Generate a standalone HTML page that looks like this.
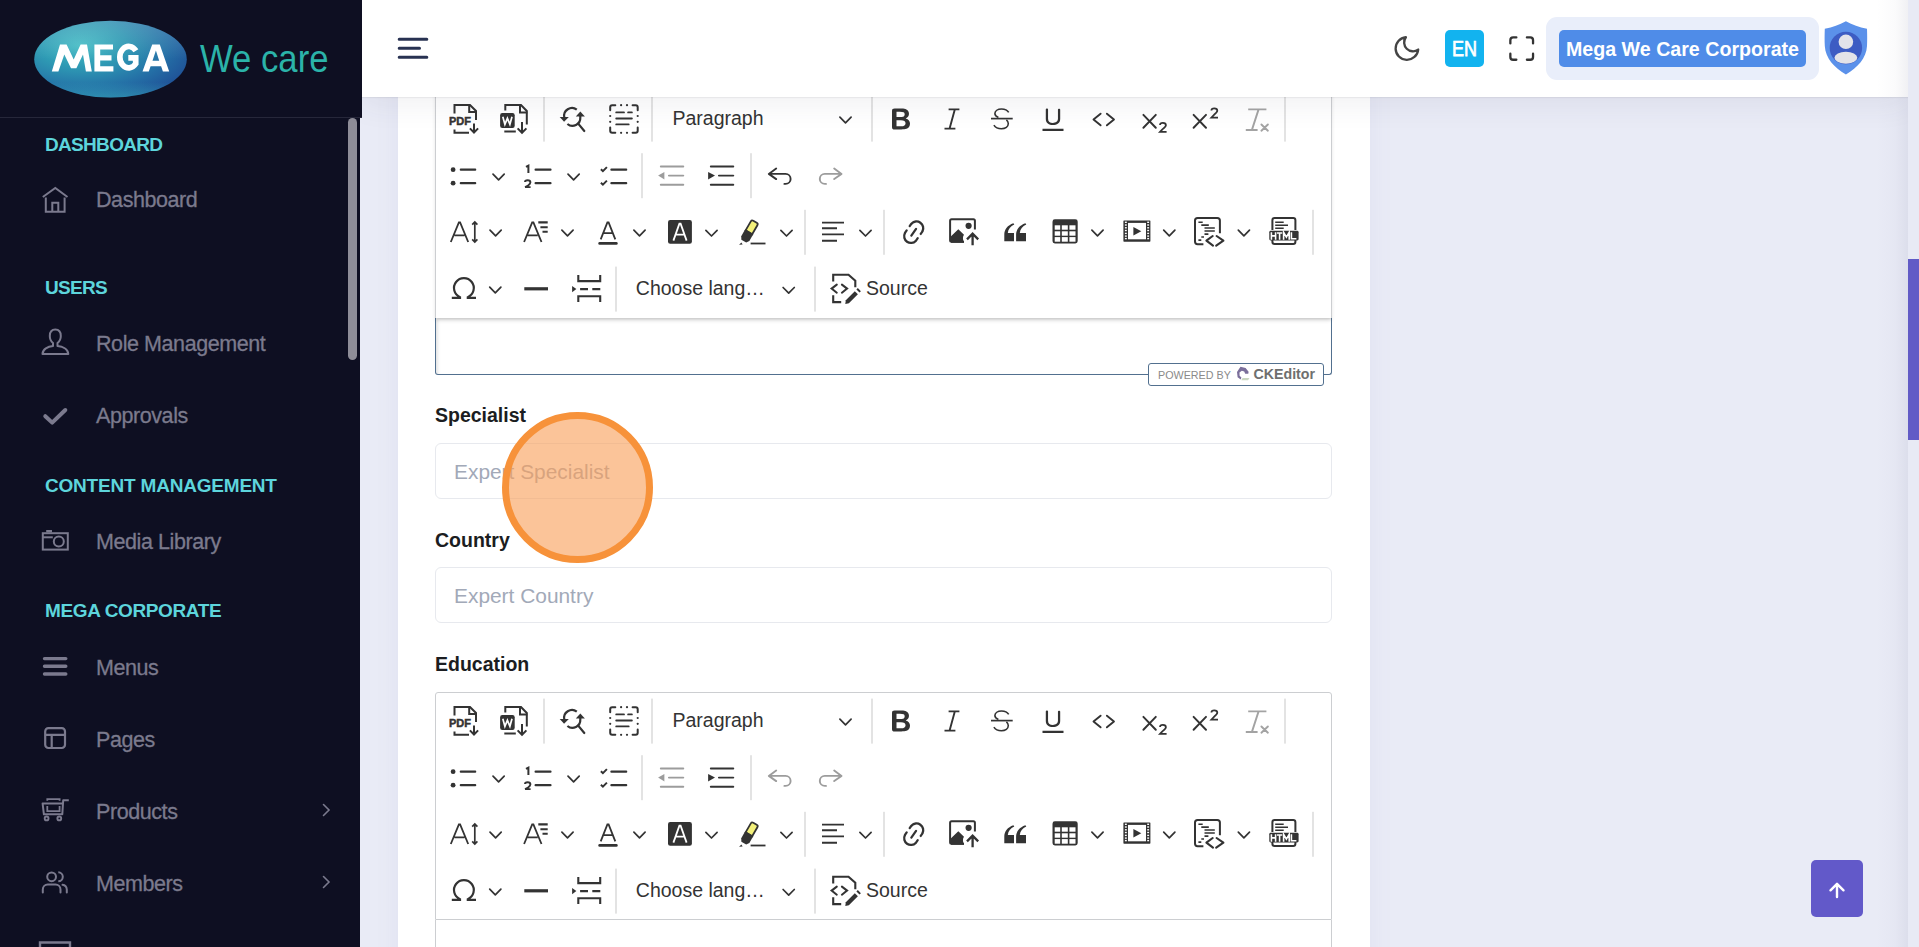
<!DOCTYPE html>
<html><head><meta charset="utf-8">
<style>
*{box-sizing:border-box;margin:0;padding:0}
html,body{width:1919px;height:947px;overflow:hidden}
body{background:#e9ebf6;font-family:"Liberation Sans",sans-serif;position:relative}
#sidebar{position:absolute;left:0;top:0;width:360px;height:947px;background:#0e0f22;z-index:11}
#logo{position:absolute;left:0;top:0;width:362px;height:118px;background:#0e0f22;border-bottom:1px solid #26273a;z-index:12}
.sb-scroll{position:absolute;left:348px;top:118px;width:9px;height:242px;border-radius:5px;background:#8e8d98}
.sh{position:absolute;left:45px;color:#5dd5dc;font-weight:700;font-size:19px;line-height:20px;white-space:nowrap;letter-spacing:-0.68px}
.si{position:absolute;left:96px;color:#7b7a8d;font-size:21.5px;line-height:24px;white-space:nowrap;letter-spacing:-0.42px;-webkit-text-stroke:0.3px #7b7a8d}
.ic{position:absolute;left:41px;top:0;width:28px;height:28px;overflow:visible}
#header{position:absolute;left:361px;top:0;width:1547px;height:97px;background:#fff;box-shadow:0 1px 1px rgba(0,0,0,.05),0 8px 28px rgba(50,50,80,.07);z-index:10}
#vscroll{position:absolute;left:1908px;top:0;width:11px;height:947px;background:#e8eaf5;z-index:11}
#vthumb{position:absolute;left:1908px;top:259px;width:11px;height:181px;background:#615bc6;z-index:12}
#card{position:absolute;left:398px;top:-10px;width:972px;height:1000px;background:#fff;box-shadow:0 0 24px rgba(110,110,170,.07)}
.lbl{position:absolute;left:435px;font-weight:700;font-size:19.5px;color:#1b1d21;white-space:nowrap;line-height:22px}
.inp{position:absolute;left:435px;width:897px;height:56px;border:1px solid #e7e9ee;border-radius:6px;background:#fff}
.ph{position:absolute;left:18px;top:16px;font-size:20.9px;color:#a2a9b8;white-space:nowrap;line-height:24px}
.tbwrap{position:absolute;left:435px;width:897px;height:228px;background:#fff;border:1px solid #ccced1}
.tbsvg{position:absolute;left:-1px;top:-1px;width:896px;height:228px;overflow:visible}
#ed1tb{top:90px;border-top:none;border-bottom:none;box-shadow:0 3px 4px -1px rgba(0,0,0,.17);z-index:3}
#ed1ed{position:absolute;left:435px;top:317px;width:897px;height:58px;border:1px solid #52708f;border-top:none;border-radius:0 0 3px 3px;background:#fff;box-shadow:inset 2px 2px 3px rgba(0,0,0,.1);z-index:2}
#badge{position:absolute;left:1148px;top:363px;width:176px;height:23px;border:1px solid #52708f;border-radius:3px;background:#fff;z-index:4}
#ed2tb{top:692px;border-radius:3px 3px 0 0}
#ed2ed{position:absolute;left:435px;top:920px;width:897px;height:60px;border:1px solid #ccced1;border-top:none;background:#fff}
#scrolltop{position:absolute;left:1811px;top:860px;width:52px;height:57px;background:#6259c9;border-radius:5px;z-index:20}
#cursor{position:absolute;left:502px;top:412px;width:151px;height:151px;border-radius:50%;border:7px solid #f7923a;background:rgba(248,160,90,.62);z-index:30}
</style></head><body>
<svg width="0" height="0" style="position:absolute">
<defs>
<g id="chev"><path d="M-5.6,-2.9 L0,2.8 L5.6,-2.9" fill="none" stroke="#333" stroke-width="1.7" stroke-linecap="round" stroke-linejoin="round"/></g>
<g id="tb" fill="none" stroke="#333" stroke-width="2">
 <!-- separators -->
 <g stroke="none" fill="#c8c8c8">
  <rect x="108.5" y="6.6" width="1" height="45"/><rect x="216.5" y="6.6" width="1" height="45"/><rect x="436.5" y="6.6" width="1" height="45"/><rect x="849.5" y="6.6" width="1" height="45"/>
  <rect x="206.5" y="63.2" width="1" height="45"/><rect x="315.5" y="63.2" width="1" height="45"/>
  <rect x="369.5" y="119.8" width="1" height="45"/><rect x="448.5" y="119.8" width="1" height="45"/><rect x="877.5" y="119.8" width="1" height="45"/>
  <rect x="180.5" y="176.6" width="1" height="45"/><rect x="379.5" y="176.6" width="1" height="45"/>
 </g>
 <!-- ROW 1 -->
 <!-- PDF -->
 <path d="M19.5,23.6 V15.1 H35 L41,21 V30"/>
 <path d="M34.2,15 V22 H41.5" />
 <path d="M19.5,39.5 V42.8 H34"/>
 <text x="14" y="34.9" font-family="Liberation Sans" font-weight="700" font-size="10" textLength="22" lengthAdjust="spacingAndGlyphs" fill="#333" stroke="#333" stroke-width="0.45">PDF</text>
 <path d="M39,33.5 V43"/><path d="M34.9,38.4 L39,42.5 L43.1,38.4"/>
 <!-- Word -->
 <path d="M70.3,20.5 V15.1 H86 L91.8,21 V34.4"/>
 <path d="M85,15 V22.6 H92.3"/>
 <rect x="65.1" y="23" width="14.6" height="14.9" rx="2.2" fill="#333" stroke="none"/>
 <path d="M67.8,26.8 L69.9,34.3 L72.4,28.3 L74.9,34.3 L77,26.8" stroke="#fff" stroke-width="1.7" stroke-linejoin="miter"/>
 <path d="M69.3,41.5 H80.8"/>
 <path d="M87,32 V43"/><path d="M82.6,38.4 L87,42.8 L91.4,38.4"/>
 <!-- find replace -->
 <path d="M141.8,19.6 A7.9,7.9 0 0 0 129.3,27.6" stroke-width="2.2"/>
 <path d="M124.7,27.1 L133.8,27.1 L129.1,31.8 Z" fill="#333" stroke="none"/>
 <path d="M132.4,34 A7.9,7.9 0 0 0 145.3,27.5 V25.5" stroke-width="2.2"/>
 <path d="M140.8,26.6 L149.9,26.6 L145.3,21.6 Z" fill="#333" stroke="none"/>
 <path d="M143.2,33.6 L149.3,41" stroke-width="2.2" stroke-linecap="round"/>
 <!-- select all -->
 <g transform="translate(174,14)" stroke-linecap="round">
  <path d="M1.2,6.3 V3.2 Q1.2,1.2 3.2,1.2 H6.3"/><path d="M23.6,1.2 H26.7 Q28.7,1.2 28.7,3.2 V6.3"/>
  <path d="M1.2,23.6 V26.8 Q1.2,28.8 3.2,28.8 H6.3"/><path d="M23.6,28.8 H26.7 Q28.7,28.8 28.7,26.8 V23.6"/>
  <g fill="#333" stroke="none">
   <circle cx="12.1" cy="1.2" r="1.1"/><circle cx="18" cy="1.2" r="1.1"/><circle cx="12.1" cy="28.8" r="1.1"/><circle cx="18" cy="28.8" r="1.1"/>
   <circle cx="1.2" cy="12" r="1.1"/><circle cx="1.2" cy="17.8" r="1.1"/><circle cx="28.7" cy="12" r="1.1"/><circle cx="28.7" cy="17.8" r="1.1"/>
  </g>
  <path d="M7.2,8.4 H15 M19.1,8.4 H22.9 M7.2,14.5 H22.9 M7.2,20.4 H19.7" stroke-width="1.8"/>
 </g>
 <text x="237.5" y="35" font-family="Liberation Sans" font-size="19.5" fill="#333" stroke="none">Paragraph</text>
 <use href="#chev" x="410.5" y="30"/>
 <!-- bold -->
 <path transform="translate(451,14) scale(1.5)" fill="#333" stroke="none" d="M10.187 17H5.773c-.637 0-1.092-.138-1.364-.415-.273-.277-.409-.718-.409-1.323V4.738c0-.617.14-1.062.419-1.332.279-.27.73-.406 1.354-.406h4.68c.69 0 1.288.041 1.793.124.506.083.96.242 1.36.478.341.197.644.447.906.75a3.262 3.262 0 0 1 .808 2.162c0 1.401-.722 2.426-2.167 3.075C15.05 10.175 16 11.315 16 13.01a3.756 3.756 0 0 1-2.296 3.504 6.1 6.1 0 0 1-1.517.377c-.571.073-1.238.11-2 .11zm-.217-6.217H7v4.087h3.069c1.977 0 2.965-.69 2.965-2.072 0-.707-.256-1.22-.768-1.537-.512-.319-1.277-.478-2.296-.478zM7 5.13v3.619h2.606c.729 0 1.292-.067 1.69-.2a1.6 1.6 0 0 0 .91-.765c.165-.267.247-.566.247-.897 0-.707-.26-1.176-.778-1.409-.519-.232-1.31-.348-2.375-.348H7z"/>
 <!-- italic -->
 <path d="M513.6,19.4 H524.4 M509.5,38.6 H520.4 M519.8,19.6 L514.6,38.4" stroke-width="1.9"/>
 <!-- strike -->
 <path d="M556,28.6 H577.7" stroke-width="1.7"/>
 <path d="M573.7,22.4 C572.4,20.2 569.8,19 566.6,19 C562.6,19 559.9,21 559.9,23.6 C559.9,25.4 561.1,26.6 563.4,27.6" stroke-width="1.6"/>
 <path d="M571.4,29.8 C572.6,30.8 573.3,32 573.3,33.6 C573.3,36.6 570.4,38.7 566.4,38.7 C562.9,38.7 560.3,37.3 558.9,35.1" stroke-width="1.6"/>
 <!-- underline -->
 <path transform="translate(603,14) scale(1.5)" fill="#333" stroke="none" d="M3 18v-1.5h14V18zm2.2-8V3.6c0-.4.4-.6.8-.6.3 0 .7.2.7.6v6.2c0 2 1.3 2.8 3.2 2.8 1.9 0 3.4-.9 3.4-2.9V3.6c0-.3.4-.5.8-.5.3 0 .7.2.7.5V10c0 2.7-2.2 4-4.9 4-2.6 0-4.7-1.2-4.7-4z"/>
 <!-- code -->
 <path d="M665.6,23.7 L658.5,29.5 L665.6,35.3 M671.9,23.7 L679,29.5 L671.9,35.3" stroke-width="1.9" stroke-linecap="round" stroke-linejoin="round"/>
 <!-- subscript -->
 <path d="M708.4,24.9 L720.8,37.7 M720.8,24.9 L708.4,37.7" stroke-width="1.95" stroke-linecap="round"/>
 <path d="M725,35 C725,33.6 726.1,32.8 727.9,32.8 C729.7,32.8 730.9,33.7 730.9,35.2 C730.9,36.7 729.7,37.6 727.6,39.2 L725,41.9 H731.6" stroke-width="1.75"/>
 <!-- superscript -->
 <path d="M758.6,24.9 L771,37.7 M771,24.9 L758.6,37.7" stroke-width="1.95" stroke-linecap="round"/>
 <path d="M776.4,20.6 C776.4,19.2 777.5,18.4 779.3,18.4 C781.1,18.4 782.3,19.3 782.3,20.8 C782.3,22.3 781.1,23.2 779,24.8 L776.4,27.5 H783" stroke-width="1.75"/>
 <!-- remove format -->
 <g stroke="#a3a3a3">
  <path d="M813.2,19.4 H831.4 M823.5,19.6 L817.1,39.4 M810.8,40 H822.6" stroke-width="1.9"/>
  <path d="M826.4,34.5 L832.9,40.7 M832.9,34.5 L826.4,40.7" stroke-width="1.9" stroke-linecap="round"/>
 </g>
 <!-- ROW 2 -->
 <g fill="#333" stroke="none"><circle cx="18.1" cy="79.7" r="2.4"/><circle cx="18.1" cy="93.2" r="2.4"/></g>
 <path d="M25.8,79.7 H40.2 M25.8,93.2 H40.2" stroke-width="2.2" stroke-linecap="round"/>
 <use href="#chev" x="63.6" y="87"/>
 <path d="M91,76.9 L93.4,75.6 V82.9" stroke-width="2"/>
 <path d="M90,92 C90,90.9 91.1,90.3 92.6,90.3 C94.2,90.3 95.4,91 95.4,92.5 C95.4,93.8 94.4,94.6 92.6,95.9 L90.1,97.1 H95.6" stroke-width="1.9"/>
 <path d="M100.6,79.7 H115.5 M100.6,93.2 H115.5" stroke-width="2.2" stroke-linecap="round"/>
 <use href="#chev" x="138.6" y="87"/>
 <path d="M165.9,79.2 L167.9,81.1 L171.9,77.1 M165.9,92.7 L167.9,94.6 L171.9,90.6" stroke-width="2"/>
 <path d="M176.4,79.7 H191.2 M176.4,93.2 H191.2" stroke-width="2.2" stroke-linecap="round"/>
 <!-- outdent -->
 <g stroke="#9c9c9c" fill="#9c9c9c">
  <path d="M225.8,76.5 H248.3 M233.9,85.6 H248.3 M225.8,94.8 H248.3" stroke-width="1.9" stroke-linecap="round"/>
  <path d="M223.1,85.6 L229.4,81.9 V89.4 Z" stroke="none"/>
 </g>
 <path d="M275.8,76.5 H298.3 M283.9,85.6 H298.3 M275.8,94.8 H298.3" stroke-width="1.9" stroke-linecap="round"/>
 <path d="M273.1,81.9 L280,85.6 L273.1,89.4 Z" fill="#333" stroke="none"/>
 <!-- redo -->
 <path d="M399.2,78.6 L406.5,83.9 L399.2,89.1 M406,83.9 H389.8 A5,5 0 0 0 389.8,93.9 H391" stroke="#9c9c9c" stroke-width="1.9" stroke-linecap="round" stroke-linejoin="round"/>
 <!-- ROW 3 -->
 <path d="M15.8,152 L23.9,132.5 H25.1 L33.2,152 M19.5,145.3 H29.5" stroke-width="1.8"/>
 <path d="M39.8,132.5 V151.5 M37.2,134.6 L39.8,132 L42.4,134.6 M37.2,149.4 L39.8,152 L42.4,149.4" stroke-width="1.7"/>
 <use href="#chev" x="60.6" y="143"/>
 <path d="M89.1,152 L97.2,132.5 H98.4 L106.5,152 M92.7,145.3 H102.7" stroke-width="1.8"/>
 <path d="M103.3,132.4 H112.7 M105.4,137.2 H112.7 M107.5,141.8 H112.7" stroke-width="2.1"/>
 <use href="#chev" x="132.5" y="143"/>
 <path d="M165.7,149.4 L172.4,132.5 H173.6 L180.3,149.4 M168.4,143.2 H177.6" stroke-width="1.8"/>
 <path d="M164.6,153.4 H181.4" stroke-width="2.6" stroke-linecap="round"/>
 <use href="#chev" x="204.5" y="143"/>
 <rect x="233" y="130.1" width="23.9" height="23.7" rx="2.2" fill="#333" stroke="none"/>
 <path d="M238.4,150.6 L244.4,133.7 H245.6 L251.6,150.6 M240.6,144.7 H249.4" stroke="#fff" stroke-width="1.8"/>
 <use href="#chev" x="276.5" y="143.2"/>
 <!-- highlighter -->
 <g transform="translate(314.3,141.6) rotate(30)">
  <path d="M-3.8,0.8 V-9.6 Q-3.8,-11.4 -2,-11.4 H2 Q3.8,-11.4 3.8,-9.6 V0.8 Z" fill="#f3f07a" stroke="#333" stroke-width="1.8"/>
  <path d="M-4.7,0 H4.7 V8 L2.8,11 H-2.8 L-4.7,8 Z" fill="#333" stroke="none"/>
 </g>
 <path d="M304.1,154.8 L307.6,154.4 L306.4,152.6 Z" fill="#333" stroke="none"/>
 <path d="M315.6,153.5 H330.5" stroke-width="1.8"/>
 <use href="#chev" x="351.5" y="143.2"/>
 <path d="M387,132.6 H409 M387,138.3 H402 M387,144.4 H409 M387,150.7 H402" stroke-width="1.9"/>
 <use href="#chev" x="430.5" y="143.2"/>
 <!-- link -->
 <path transform="translate(463.7,127.2) scale(1.5)" fill="#333" stroke="none" d="m11.077 15 .991-1.416a.75.75 0 1 1 1.229.86l-1.148 1.64a.748.748 0 0 1-.217.206 5.251 5.251 0 0 1-8.503-5.955.741.741 0 0 1 .12-.274l1.147-1.639a.75.75 0 1 1 1.228.86L4.933 10.7l.006.003a3.75 3.75 0 0 0 6.132 4.294l.006.004zm5.494-5.335a.748.748 0 0 1-.12.274l-1.147 1.639a.75.75 0 1 1-1.228-.86l.86-1.23a3.75 3.75 0 0 0-6.144-4.301l-.86 1.229a.75.75 0 0 1-1.229-.86l1.148-1.64a.748.748 0 0 1 .217-.206 5.251 5.251 0 0 1 8.503 5.955zm-4.563-2.532a.75.75 0 0 1 .184 1.045l-3.155 4.505a.75.75 0 1 1-1.229-.86l3.155-4.506a.75.75 0 0 1 1.045-.184z"/>
 <!-- image upload -->
 <path d="M529,151.8 H516.6 Q515.1,151.8 515.1,150.3 V130.7 Q515.1,129.2 516.6,129.2 H538.4 Q539.9,129.2 539.9,130.7 V139.4" stroke-width="2"/>
 <circle cx="533.6" cy="135.8" r="3.1" fill="#333" stroke="none"/>
 <path d="M516,152.8 V146.2 L523.3,139.2 L529,144.8 C527.6,146.5 527.6,149.8 529,152 V152.8 Z" fill="#333" stroke="none"/>
 <path d="M537.6,143.6 V155.2 M532,149.4 L537.6,143.6 L543.2,149.4" stroke-width="2.3"/>
 <!-- blockquote -->
 <g fill="#333" stroke="none">
  <path d="M569.3,151.3 H579 V143.1 H572.8 C573.2,139 575.4,136.2 579.3,134.5 L578.4,133.3 C572.6,135.3 569.3,139.5 569.3,144.7 Z"/>
  <path d="M581.1,151.3 H591 V143.1 H584.8 C585.2,139 587.4,136.2 591.3,134.5 L590.4,133.3 C584.6,135.3 581.1,139.5 581.1,144.7 Z"/>
 </g>
 <!-- table -->
 <rect x="617.5" y="129.3" width="25.2" height="24.1" rx="2.4" fill="#333" stroke="none"/>
 <g fill="#fff" stroke="none">
  <rect x="619.7" y="135.3" width="5.5" height="4.4"/><rect x="626.8" y="135.3" width="6" height="4.4"/><rect x="634.4" y="135.3" width="6.1" height="4.4"/>
  <rect x="619.7" y="141.3" width="5.5" height="4.4"/><rect x="626.8" y="141.3" width="6" height="4.4"/><rect x="634.4" y="141.3" width="6.1" height="4.4"/>
  <rect x="619.7" y="147.1" width="5.5" height="4.6"/><rect x="626.8" y="147.1" width="6" height="4.6"/><rect x="634.4" y="147.1" width="6.1" height="4.6"/>
 </g>
 <use href="#chev" x="662.5" y="143"/>
 <!-- media embed -->
 <rect x="688.4" y="130.4" width="27" height="21.3" rx="0.6" fill="#333" stroke="none"/>
 <rect x="693" y="132.9" width="18" height="16.4" fill="#fff" stroke="none"/>
 <g fill="#fff" stroke="none"><rect x="689.9" y="131.6" width="1.9" height="1.4"/><rect x="712.2" y="131.6" width="1.9" height="1.4"/><rect x="689.9" y="134.3" width="1.9" height="1.4"/><rect x="712.2" y="134.3" width="1.9" height="1.4"/><rect x="689.9" y="137.1" width="1.9" height="1.4"/><rect x="712.2" y="137.1" width="1.9" height="1.4"/><rect x="689.9" y="139.8" width="1.9" height="1.4"/><rect x="712.2" y="139.8" width="1.9" height="1.4"/><rect x="689.9" y="142.7" width="1.9" height="1.4"/><rect x="712.2" y="142.7" width="1.9" height="1.4"/><rect x="689.9" y="145.4" width="1.9" height="1.4"/><rect x="712.2" y="145.4" width="1.9" height="1.4"/><rect x="689.9" y="147.9" width="1.9" height="1.4"/><rect x="712.2" y="147.9" width="1.9" height="1.4"/></g>
 <path d="M698.4,137 L706.3,141.3 L698.4,145.6 Z" fill="#333" stroke="none"/>
 <use href="#chev" x="734.3" y="143"/>
 <!-- code block / html embed -->
 <path d="M768.4,154.2 H762.6 Q760,154.2 760,151.6 V130.5 Q760,127.9 762.6,127.9 H782.3 Q784.9,127.9 784.9,130.5 V143.3" stroke-width="2"/>
 <path d="M763.4,132.2 H767.7 M766.3,135.1 H773.8 M769.5,138 H779.8 M769.5,141 H779.8 M769.5,144.1 H773.4 M766.3,147 H769 M763.4,150.1 H766.3" stroke-width="1.6"/>
 <path d="M777.7,146 L771.4,150.6 L778,155.6 M781.6,146 L788.4,150.7 L781.2,155.6" stroke-width="2.1" stroke-linecap="round" stroke-linejoin="round"/>
 <use href="#chev" x="808.9" y="143"/>
 <!-- HTML -->
 <path d="M837.4,140 V130.3 Q837.4,128.1 839.6,128.1 H858.2 Q860.4,128.1 860.4,130.3 V140" stroke-width="2"/>
 <path d="M840.2,132.2 H848.7 M840.2,135.3 H853 M840.2,138.2 H848.7" stroke-width="1.6"/>
 <rect x="834.3" y="140.8" width="29.3" height="9.6" rx="1.4" fill="#333" stroke="none"/>
 <path d="M836.4,142.2 V149.7 M840.6,142.2 V149.7 M836.4,145.9 H840.6 M842,143 H847.2 M844.6,143 V149.7 M848.6,149.7 V142.2 L851.4,147.2 L854.2,142.2 V149.7 M856.4,142.2 V148.8 H861.4" stroke="#fff" stroke-width="1.6" stroke-linecap="butt" stroke-linejoin="miter"/>
 <path d="M837.4,150 V151.8 Q837.4,154 839.6,154 H858.2 Q860.4,154 860.4,151.8 V150" stroke-width="2"/>
 <!-- ROW 4 -->
 <path d="M16.8,207.9 H25 V207.2 A9.9,9.9 0 1 1 32.8,207.2 V207.9 H41" stroke-width="2.2"/>
 <use href="#chev" x="60.3" y="200"/>
 <rect x="89.3" y="197.2" width="23.7" height="3.2" fill="#333" stroke="none"/>
 <path d="M143.3,185 V191.1 H165.2 V185 M143.3,212 V206.2 H165.2 V212" stroke-width="2.1"/>
 <path d="M137.1,195.9 L141.4,199.1 L137.1,202.3 Z" fill="#333" stroke="none"/>
 <path d="M145.1,199.1 H153 M157.3,199.1 H165.3" stroke-width="2.3"/>
 <text x="200.8" y="205" font-family="Liberation Sans" font-size="19.5" fill="#333" stroke="none">Choose lang…</text>
 <use href="#chev" x="353.7" y="200.4"/>
 <!-- source -->
 <path d="M398.2,191.6 V184.8 H413.5 L420.3,190.8 V197.3" stroke-width="2.1"/>
 <path d="M398.2,205.3 V212.1 H406.2" stroke-width="2.1"/>
 <path d="M401.8,194.6 L396.6,198.6 L401.8,202.7 M406.9,194.6 L412.1,198.6 L406.9,202.7" stroke-width="2" stroke-linecap="round" stroke-linejoin="miter"/>
 <path d="M410.8,210.2 L419.8,201.2 L422.9,204.3 L413.9,213.3 L410.3,213.9 Z" fill="#333" stroke="none"/>
 <path d="M421.4,199.5 L422.8,198.1 L425.9,201.2 L424.5,202.6 Z" fill="#333" stroke="none"/>
 <text x="431" y="205" font-family="Liberation Sans" font-size="19.5" fill="#333" stroke="none">Source</text>
</g>
</defs></svg>

<div id="card"></div>
<div id="sidebar">
  <div class="sb-scroll"></div>
<svg width="360" height="947" style="position:absolute;left:0;top:0" fill="none" stroke="#7b7a8e" stroke-width="2">
  <path d="M42.8,197 L55.3,188 L67.5,197 M45.8,197.5 V211.7 H64.6 V197.5 M52.3,211.7 V202.8 H58.3 V211.7" stroke-linejoin="miter"/>
  <path d="M42.5,354 H68.3 C68,349 62.5,346.5 57.5,346 V343 C59.5,341.5 60.8,339 60.8,336 C60.8,331.5 58.5,329.5 55.3,329.5 C52,329.5 49.8,331.5 49.8,336 C49.8,339 51,341.5 53,343 V346 C48,346.5 42.5,349 42.5,354 Z" stroke-linejoin="round"/>
  <path d="M45.3,416.2 L52.2,422.6 L65.3,410" stroke-width="4" stroke-linecap="round" stroke-linejoin="round"/>
  <rect x="42.8" y="533.2" width="25" height="16.4"/>
  <path d="M46.2,531.2 H52" stroke-width="2.4"/>
  <path d="M43,537.3 H52.8"/>
  <circle cx="58.8" cy="541.5" r="5"/>
  <path d="M44.5,658.6 H65.8 M44.5,666.3 H65.8 M44.5,674 H65.8" stroke-width="3.4" stroke-linecap="round"/>
  <rect x="45.2" y="728.2" width="19.8" height="19.8" rx="3.2" stroke-width="2.2"/>
  <path d="M45.2,734.9 H65 M51.7,734.9 V748" stroke-width="2.2"/>
  <path d="M68.8,800.3 H63.2 L62.3,814.3 H43.9 L42.6,803.5 H63" stroke-linejoin="round"/>
  <path d="M47.3,806 V811.2 H59.6 V806 M47.3,800.8 V799.2 H59.6 V800.8" stroke-width="1.8"/>
  <circle cx="46.6" cy="818.4" r="1.9" stroke-width="1.9"/><circle cx="59.3" cy="818.4" r="1.9" stroke-width="1.9"/>
  <circle cx="51.6" cy="876.8" r="4.4"/>
  <path d="M58.3,872.3 A4.4,4.4 0 0 1 58.3,881.3"/>
  <path d="M42.8,892.5 V889.5 A5,5 0 0 1 47.8,884.5 H55.5 A5,5 0 0 1 60.5,889.5 V892.5 M62.5,884.8 A5,5 0 0 1 66.8,889.5 V892.5" stroke-linecap="round"/>
  <path d="M40,947 V942.5 H70 V947" stroke-width="2.4"/>
  <path d="M323.5,804.5 L329,810 L323.5,815.5 M323.5,876.5 L329,882 L323.5,887.5" stroke-width="1.6" stroke-linecap="round"/>
</svg>
  <div class="sh" style="top:135px">DASHBOARD</div>
  <div class="si" style="top:188px">Dashboard</div>
  <div class="sh" style="top:278px">USERS</div>
  <div class="si" style="top:332px">Role Management</div>
  <div class="si" style="top:404px">Approvals</div>
  <div class="sh" style="top:476px;letter-spacing:-0.2px">CONTENT MANAGEMENT</div>
  <div class="si" style="top:530px">Media Library</div>
  <div class="sh" style="top:601px;letter-spacing:-0.38px">MEGA CORPORATE</div>
  <div class="si" style="top:656px">Menus</div>
  <div class="si" style="top:728px">Pages</div>
  <div class="si" style="top:800px">Products</div>
  <div class="si" style="top:872px">Members</div>
</div>
<div id="logo"><svg width="362" height="118" style="position:absolute;left:0;top:0">
 <defs>
  <radialGradient id="lg1" cx="0.3" cy="0.32" r="0.8">
   <stop offset="0" stop-color="#48bdc6"/><stop offset="0.35" stop-color="#2e9ab4"/><stop offset="0.72" stop-color="#246fa6"/><stop offset="1" stop-color="#1f4f96"/>
  </radialGradient>
  <linearGradient id="lg2" x1="0" y1="0" x2="0" y2="1">
   <stop offset="0" stop-color="#fff" stop-opacity="0.18"/><stop offset="0.5" stop-color="#fff" stop-opacity="0"/><stop offset="0.8" stop-color="#3cc0c4" stop-opacity="0"/><stop offset="1" stop-color="#3cc4c4" stop-opacity="0.45"/>
  </linearGradient>
 </defs>
 <ellipse cx="110.5" cy="59.2" rx="76.3" ry="38.4" fill="url(#lg1)"/>
 <ellipse cx="110.5" cy="59.2" rx="76.3" ry="38.4" fill="url(#lg2)"/>
 <g fill="#fff">
  <path d="M51.8,71.5 L60,44.4 H66.6 L73.7,59.6 L80.6,44.4 H87 L91.8,71.5 H85.9 L83,54.6 L76.4,68.3 H71 L64.3,54.6 L58.4,71.5 Z"/>
  <path d="M94.4,44.4 H113 V49.6 H100.2 V55.3 H111.5 V60.4 H100.2 V66.3 H113.4 V71.5 H94.4 Z"/>
  <path d="M135.9,50.8 A8.9,10.7 0 1 0 135.7,63.8 V57.9 H128.3" fill="none" stroke="#fff" stroke-width="5.7"/>
  <path fill-rule="evenodd" d="M142.5,71.5 L152.2,44.4 H159.8 L169.2,71.5 H162.9 L161.1,66.2 H150.6 L148.8,71.5 Z M152.5,60.8 H159.2 L155.9,50.6 Z"/>
 </g>
 <text x="200" y="71.9" font-family="Liberation Sans" font-size="38.5" fill="#2bb3a9" textLength="128.5" lengthAdjust="spacingAndGlyphs">We care</text>
</svg></div>
<div id="header">
 <svg width="1547" height="97" style="position:absolute;left:0;top:0">
  <path d="M38.2,39.3 H65.8 M38.2,48.3 H58.5 M38.2,57.3 H65.8" stroke="#283252" stroke-width="3" stroke-linecap="round" fill="none"/>
  <g transform="translate(1030.8,33.5) scale(1.256)"><path d="M21 12.79A9 9 0 1 1 11.21 3 7 7 0 0 0 21 12.79z" fill="none" stroke="#444" stroke-width="1.85" stroke-linejoin="round"/></g>
  <rect x="1084" y="30" width="39" height="37" rx="5" fill="#12b3ef"/>
  <text x="1103.5" y="55.8" text-anchor="middle" font-family="Liberation Sans" font-size="21.8" fill="#fff" stroke="#fff" stroke-width="0.75" textLength="25" lengthAdjust="spacingAndGlyphs">EN</text>
  <path d="M1149.35,43.45 V40.2 Q1149.35,37.45 1152.1,37.45 H1155.35 M1165.9,37.45 H1169.3 Q1172.05,37.45 1172.05,40.2 V43.45 M1172.05,53.75 V57 Q1172.05,59.75 1169.3,59.75 H1165.9 M1155.35,59.75 H1152.1 Q1149.35,59.75 1149.35,57 V53.75" fill="none" stroke="#333" stroke-width="2.3" stroke-linecap="round"/>
  <rect x="1185" y="17" width="273" height="63" rx="11" fill="#e9eefa"/>
  <rect x="1198" y="30" width="247" height="37" rx="5" fill="#4f8ce8"/>
  <text x="1321.5" y="55.7" text-anchor="middle" font-family="Liberation Sans" font-size="20" font-weight="700" fill="#fff" textLength="233" lengthAdjust="spacingAndGlyphs">Mega We Care Corporate</text>
  <defs><clipPath id="avc"><circle cx="1484.9" cy="48" r="16.2"/></clipPath></defs>
  <path d="M1484.9,21.2 C1478,24.5 1472,27.5 1463.8,28.8 C1463.6,35 1463.5,41 1463.8,46 C1464.5,58 1473,67.5 1484.9,74.5 C1496.8,67.5 1505.3,58 1506,46 C1506.3,41 1506.2,35 1506,28.8 C1497.8,27.5 1491.8,24.5 1484.9,21.2 Z" fill="#5b91ea"/>
  <circle cx="1484.9" cy="48" r="16.2" fill="#3d5cc3"/>
  <g clip-path="url(#avc)"><circle cx="1484.9" cy="41.8" r="7.3" fill="#e3e3ea"/><ellipse cx="1484.9" cy="57.8" rx="11.4" ry="6" fill="#e3e3e8"/></g>
 </svg>
</div>
<div id="rshade" style="position:absolute;left:1876px;top:0;width:32px;height:947px;background:linear-gradient(90deg,rgba(70,70,110,0) 0%,rgba(70,70,110,.025) 60%,rgba(70,70,110,.08) 100%);z-index:13"></div><div id="vscroll"></div><div id="vthumb"></div>

<div class="tbwrap" id="ed1tb"><svg class="tbsvg" viewBox="0 0 896 228" style="top:0"><use href="#tb"/>
 <path d="M341.2,78.6 L333.8,83.9 L341.2,89.1 M334.4,83.9 H350.6 A5,5 0 0 1 350.6,93.9 H349.4" fill="none" stroke="#333" stroke-width="1.9" stroke-linecap="round" stroke-linejoin="round"/>
</svg></div>
<div id="ed1ed"></div>
<div id="badge"><svg width="176" height="23" style="position:absolute;left:-1px;top:-1px">
 <text x="10" y="15.7" font-family="Liberation Sans" font-size="10.7" fill="#8a8a8a" textLength="72.8" lengthAdjust="spacingAndGlyphs">POWERED BY</text>
 <path d="M92.5,3.8 L97.6,5 L100.6,8.8 L100.3,10.7 L97.2,10.7 L96.2,8.4 L93.8,7.8 L91.5,9.5 L91.6,12.8 L93.4,14.6 L92.7,16.6 L89.6,14.2 L89,9 Z" fill="#7b6f9b"/>
 <path d="M94.5,15 H101.5 L100,17.3 H93.3 Z" fill="#c9d6c0"/>
 <text x="105.5" y="15.7" font-family="Liberation Sans" font-size="15" font-weight="700" fill="#6f6f6f" textLength="61.5" lengthAdjust="spacingAndGlyphs">CKEditor</text>
</svg></div>

<div class="lbl" style="top:404px">Specialist</div>
<div class="inp" style="top:443px"><div class="ph">Expert Specialist</div></div>
<div class="lbl" style="top:529px">Country</div>
<div class="inp" style="top:567px"><div class="ph">Expert Country</div></div>
<div class="lbl" style="top:653px">Education</div>

<div class="tbwrap" id="ed2tb"><svg class="tbsvg" viewBox="0 0 896 228"><use href="#tb"/><path d="M341.2,78.6 L333.8,83.9 L341.2,89.1 M334.4,83.9 H350.6 A5,5 0 0 1 350.6,93.9 H349.4" fill="none" stroke="#9c9c9c" stroke-width="1.9" stroke-linecap="round" stroke-linejoin="round"/></svg></div>
<div id="ed2ed"></div>

<div id="scrolltop"><svg width="52" height="57" style="position:absolute;left:0;top:0"><path d="M26,37 V24.5 M19.5,30.3 L26,23.8 L32.5,30.3" fill="none" stroke="#fff" stroke-width="2.4" stroke-linecap="round" stroke-linejoin="round"/></svg></div>
<div id="cursor"></div>
</body></html>
